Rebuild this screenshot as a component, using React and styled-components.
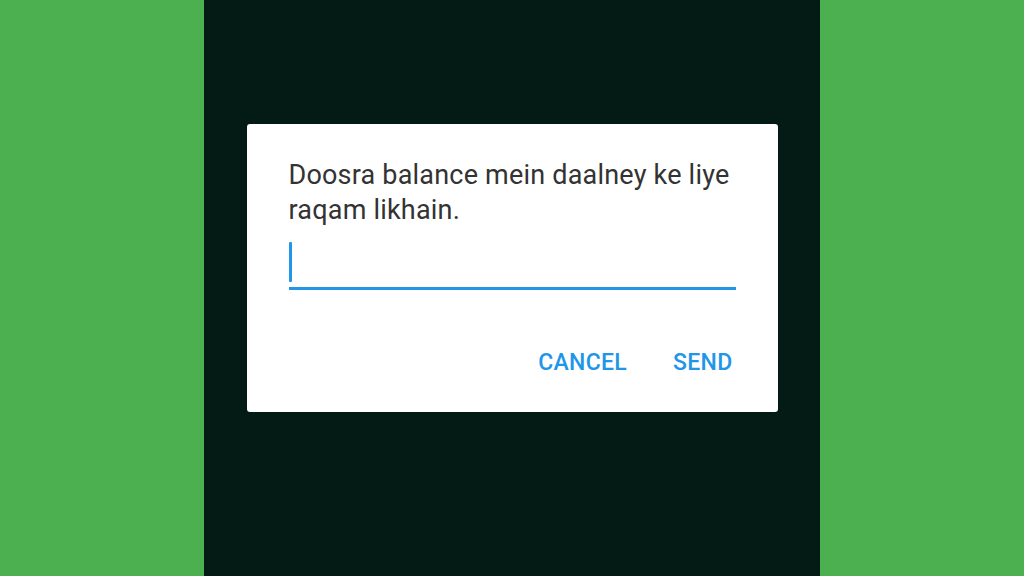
import React from "react";
import styled, { createGlobalStyle } from "styled-components";

const Global = createGlobalStyle`
  html, body { margin: 0; padding: 0; }
  body { font-family: Roboto, "Noto Sans", sans-serif; }
`;

const Page = styled.div`
  width: 1024px;
  height: 576px;
  display: flex;
  background: #4caf50;
`;

const Screen = styled.div`
  margin-left: 204px;
  width: 616px;
  height: 576px;
  background: #041a15;
  display: flex;
  align-items: flex-start;
  justify-content: center;
  padding-top: 124px;
  box-sizing: border-box;
`;

const Dialog = styled.div`
  width: 531px;
  height: 288px;
  background: #ffffff;
  border-radius: 3px;
  box-sizing: border-box;
  padding: 34px 42px 0 42px;
  display: flex;
  flex-direction: column;
`;

const Message = styled.div`
  font-size: 27px;
  line-height: 35px;
  letter-spacing: 0.2px;
  color: #333333;
`;

const Field = styled.div`
  margin-top: 14px;
  height: 45px;
  border-bottom: 3px solid #2196e8;
  display: flex;
  align-items: flex-start;
`;

const Caret = styled.div`
  width: 3px;
  height: 40px;
  background: #2196e8;
  border-radius: 1px;
`;

const Actions = styled.div`
  margin-top: 59px;
  display: flex;
  justify-content: flex-end;
  gap: 46px;
  padding-right: 3px;
`;

const Action = styled.button`
  border: 0;
  background: none;
  padding: 0;
  font-family: Roboto, sans-serif;
  font-weight: 500;
  font-size: 23px;
  line-height: 27px;
  letter-spacing: 0.3px;
  color: #2196e8;
`;

export default function App() {
  return (
    <Page>
      <Global />
      <Screen>
        <Dialog>
          <Message>
            Doosra balance mein daalney ke liye
            <br />
            raqam likhain.
          </Message>
          <Field>
            <Caret />
          </Field>
          <Actions>
            <Action>CANCEL</Action>
            <Action>SEND</Action>
          </Actions>
        </Dialog>
      </Screen>
    </Page>
  );
}
